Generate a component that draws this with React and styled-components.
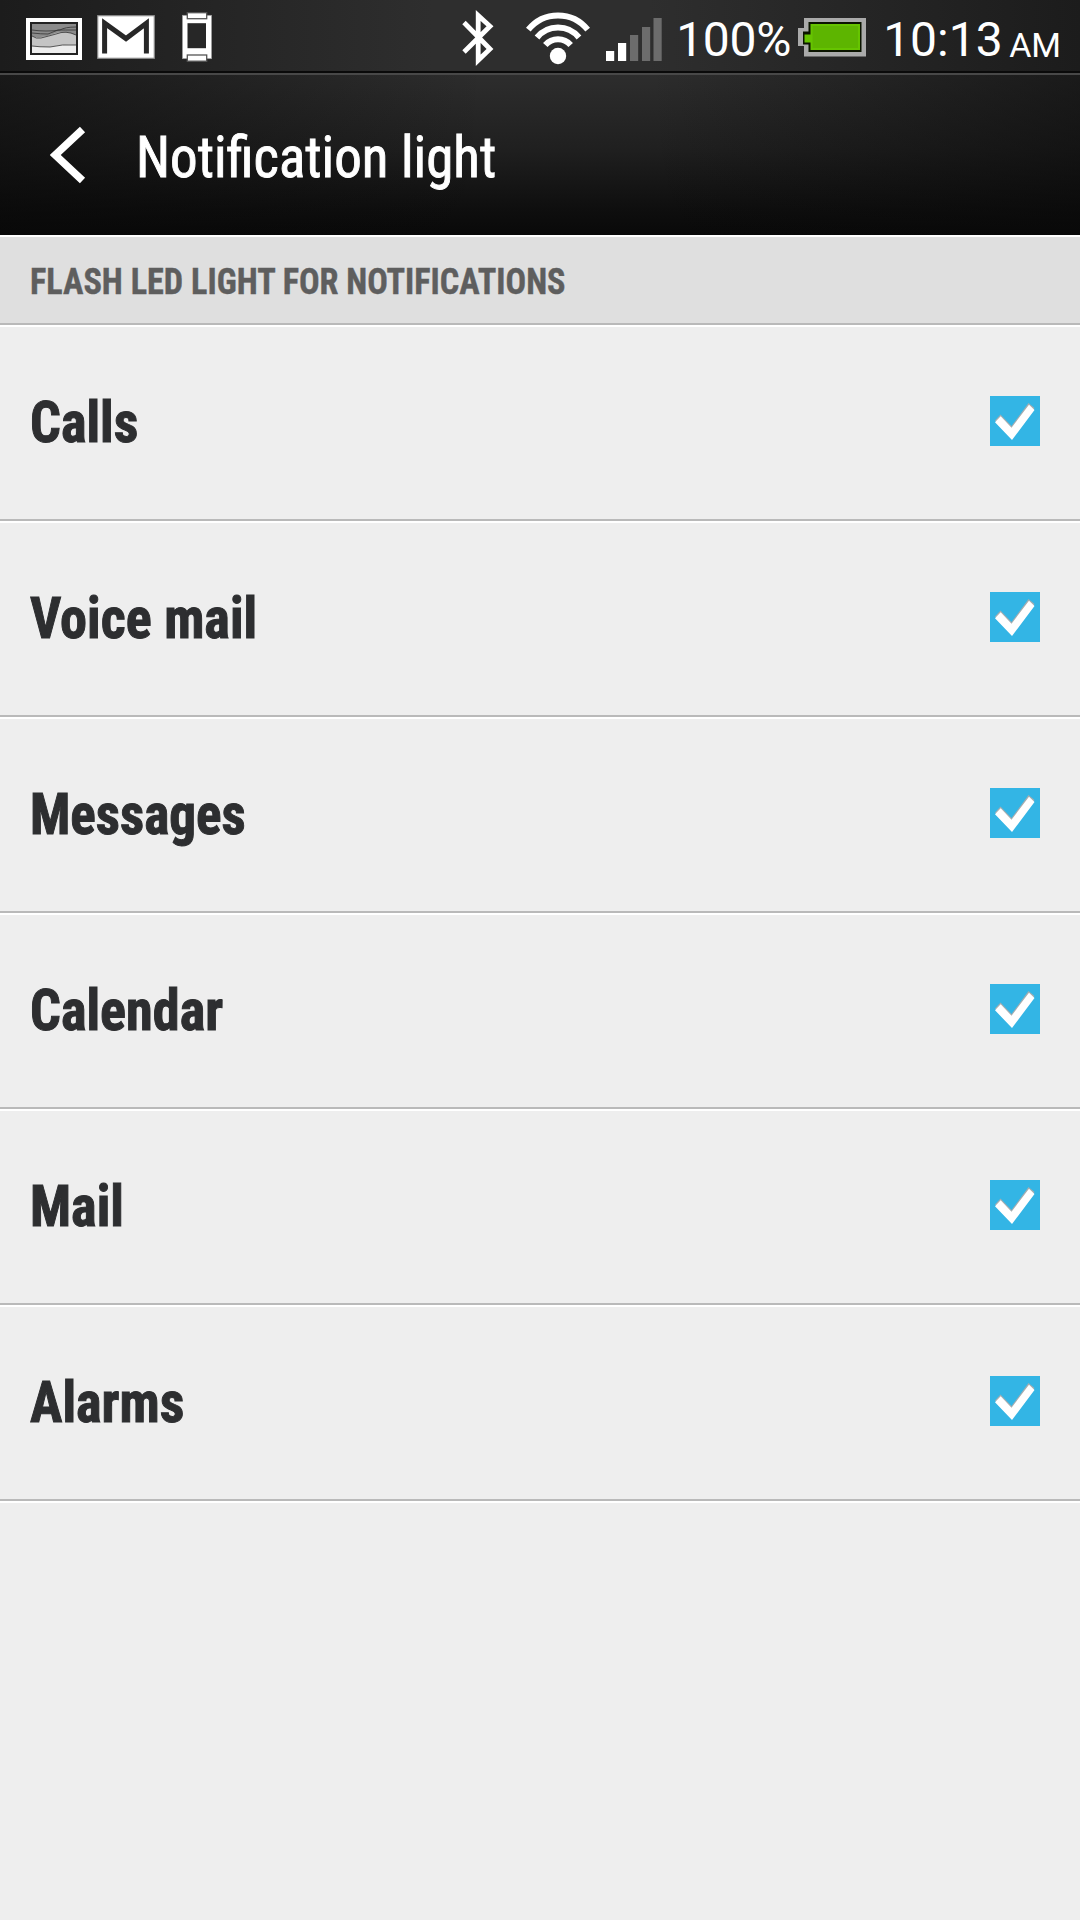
import React, { useState } from "react";
import styled, { createGlobalStyle } from "styled-components";

const ITEMS = [
  { name: "Calls" },
  { name: "Voice mail" },
  { name: "Messages", stretch: 0.918 },
  { name: "Calendar" },
  { name: "Mail" },
  { name: "Alarms" },
];

const BARS = [
  { x: 0, h: 10, on: true },
  { x: 12, h: 18, on: true },
  { x: 24, h: 26 },
  { x: 36, h: 34 },
  { x: 47.5, h: 43 },
];

export default function App() {
  const [checked, setChecked] = useState(() => ITEMS.map(() => true));

  const toggle = (index) =>
    setChecked((prev) => prev.map((c, i) => (i === index ? !c : c)));

  return (
    <>
      <GlobalStyle />
      <Screen>
        <StatusBar>
          <LeftIcons>
            <PictureIcon />
            <GmailIcon />
            <WatchIcon />
          </LeftIcons>
          <RightIcons>
            <BluetoothIcon />
            <WifiIcon />
            <SignalIcon />
            <Percent>100%</Percent>
            <BatteryIcon />
            <Clock>10:13</Clock>
            <Meridiem>AM</Meridiem>
          </RightIcons>
        </StatusBar>
        <Header>
          <BackButton aria-label="Back">
            <svg width="36" height="58" viewBox="0 0 36 58">
              <path d="M32.500 3.500 5.200 29 32.500 54.500" fill="none" stroke="#fff" strokeWidth="7.6" />
            </svg>
          </BackButton>
          <Title>Notification light</Title>
        </Header>
        <SectionHeader>
          <SectionTitle>FLASH LED LIGHT FOR NOTIFICATIONS</SectionTitle>
        </SectionHeader>
        {ITEMS.map((item, index) => (
          <Row key={item.name} onClick={() => toggle(index)}>
            <Label $stretch={item.stretch}>{item.name}</Label>
            <Checkbox role="checkbox" aria-checked={checked[index]} $checked={checked[index]}>
              {checked[index] && <CheckMark />}
            </Checkbox>
          </Row>
        ))}
        <Rest />
      </Screen>
    </>
  );
}

function PictureIcon() {
  return (
    <svg width="56" height="42" viewBox="0 0 56 42">
      <rect width="56" height="42" fill="#fff" />
      <rect x="4" y="4" width="48" height="33" fill="#222" />
      <rect x="6" y="6" width="44" height="29" fill="#8b8b8b" />
      <path d="M6 18q4 2 9 1 8-1 15-4 10-3 20 2v18H6z" fill="#c4c4c4" />
      <path d="M6 28q7 1 18 1 12-3 26-2v8H6z" fill="#ededed" />
      <path
        d="M6 12q7 1 14 1 9 0 14-1 5-3 16-3M6 15q9 1 16 1l10-4q6 0 18 0M6 18q4 3 9 2 8-2 15-4 10-4 20 1M6 28q7 1 18 1 12-3 26-2"
        fill="none"
        stroke="#333"
        strokeWidth="0.8"
      />
    </svg>
  );
}

function GmailIcon() {
  return (
    <svg width="58" height="44" viewBox="0 0 58 44">
      <rect x="0.7" y="0.7" width="56.6" height="42.6" fill="#fff" stroke="#8a8a8a" strokeWidth="1.2" />
      <path d="M7.6 38.5V8.2L29 23.6 49.4 8.2v30.3" fill="none" stroke="#272727" strokeWidth="5" strokeLinejoin="miter" />
    </svg>
  );
}

function WatchIcon() {
  return (
    <svg width="30" height="50" viewBox="0 0 30 50">
      <rect x="0.4" y="3.3" width="29.2" height="43.4" fill="#fff" stroke="#999" strokeWidth="0.7" />
      <rect x="5.5" y="11.2" width="18.5" height="25" fill="#272727" />
      <rect x="5.3" y="0.7" width="19.4" height="6" fill="#fff" stroke="#555" strokeWidth="1.3" />
      <rect x="5.3" y="43" width="19.4" height="6.2" fill="#fff" stroke="#555" strokeWidth="1.3" />
    </svg>
  );
}

function BluetoothIcon() {
  return (
    <svg width="32" height="58" viewBox="0 0 32 58">
      <path d="M2 13.5 28 40 16.2 51.3V6.5L28 17.3 2 43" fill="none" stroke="#fff" strokeWidth="4.8" />
    </svg>
  );
}

function WifiIcon() {
  return (
    <svg width="64" height="54" viewBox="0 0 64 54">
      <circle cx="32" cy="45" r="8.2" fill="#fff" />
      <g fill="none" stroke="#fff" strokeWidth="6">
        <path d="M2.3 18.7A38 38 0 0 1 61.7 18.7" />
        <path d="M11 26.5A27 27 0 0 1 53 26.5" />
        <path d="M19.3 34A17 17 0 0 1 44.7 34" />
      </g>
    </svg>
  );
}

function SignalIcon() {
  return (
    <svg width="56" height="43" viewBox="0 0 56 43">
      {BARS.map((b) => (
        <rect key={b.x} x={b.x} y={43 - b.h} width="8.2" height={b.h} fill={b.on ? "#fff" : "#6c6c6c"} />
      ))}
    </svg>
  );
}

function BatteryIcon() {
  return (
    <svg width="68" height="39" viewBox="0 0 68 39">
      <path d="M6 0h62v38.5H6V28H0V10h6z" fill="#aaa" />
      <path d="M10.5 4h53v30h-53v-7.500H5V13.500h5.500z" fill="#0b1400" />
      <path d="M12.500 6h49.500v26h-49.500v-7.500H6.500v-8h6z" fill="#66c400" />
      <path d="M14.500 8h45.500v22h-45.500z" fill="#5db500" />
    </svg>
  );
}

function CheckMark() {
  return (
    <svg width="50" height="50" viewBox="0 0 50 50">
      <path d="M5 24.500 10.500 18.500 21.500 30 38.500 7 44.500 12 22 42.500z" fill="#a5adb0" />
      <path d="M5 26.300 10.700 20.300 21.500 31.800 39 8.700 44.500 14 22 44z" fill="#fff" />
    </svg>
  );
}

const GlobalStyle = createGlobalStyle`
  * {
    box-sizing: border-box;
  }
  body {
    margin: 0;
    background: #eee;
    font-family: Roboto, sans-serif;
  }
  svg {
    display: block;
    flex-shrink: 0;
  }
`;

const Screen = styled.div`
  display: flex;
  flex-direction: column;
  width: 1080px;
  height: 1920px;
  background: #eee;
  overflow: hidden;
`;

const StatusBar = styled.div`
  display: flex;
  justify-content: space-between;
  height: 73px;
  flex-shrink: 0;
  padding: 0 19px 0 26px;
  border-bottom: 2px solid #0a0a0a;
  background: linear-gradient(90deg, #1c1c1c, #2e2e2e 40%, #2e2e2e 60%, #1c1c1c);
  color: #fff;
`;

const LeftIcons = styled.div`
  display: flex;
  align-items: center;

  svg:nth-child(1) {
    margin: 7px 15px 0 0;
  }
  svg:nth-child(2) {
    margin: 3px 27px 0 0;
  }
  svg:nth-child(3) {
    margin-top: 3px;
  }
`;

const RightIcons = styled.div`
  display: flex;
  align-items: center;

  svg:nth-child(1) {
    margin: 5px 32px 0 0;
  }
  svg:nth-child(2) {
    margin: 4px 16px 0 0;
  }
  svg:nth-child(3) {
    margin: 8px 14px 0 0;
  }
`;

const Percent = styled.span`
  width: 122px;
  margin-top: 8px;
  font-size: 48px;
  line-height: 56px;
  letter-spacing: -0.3px;

  & + svg {
    margin: 4px 17px 0 0;
  }
`;

const Clock = styled.span`
  width: 126px;
  margin-top: 8px;
  font-size: 48px;
  line-height: 56px;
`;

const Meridiem = styled.span`
  margin-top: 18px;
  font-size: 34px;
  line-height: 40px;
`;

const Header = styled.header`
  display: flex;
  align-items: center;
  height: 162px;
  flex-shrink: 0;
  padding-left: 50px;
  border-top: 2px solid #484848;
  background: linear-gradient(90deg, rgba(8, 8, 8, 0.55), transparent 45%, transparent 60%, rgba(8, 8, 8, 0.5)),
    linear-gradient(#2d2d2d, #202020 45%, #0e0e0e 85%, #090909);
`;

const BackButton = styled.button`
  width: 36px;
  margin: 0 50px 0 0;
  padding: 0;
  border: 0;
  background: none;
`;

// Condensed face, drawn slightly narrower than the font's own width
const CondensedText = styled.span`
  font-family: "Roboto Condensed", Roboto, sans-serif;
  font-stretch: 75%;
  transform-origin: 0 50%;
`;

const Title = styled(CondensedText).attrs({ as: "h1" })`
  margin: 0;
  padding-top: 4px;
  font-size: 58px;
  font-weight: 400;
  line-height: 68px;
  color: #fff;
  -webkit-text-stroke: 0.9px #fff;
  transform: scaleX(0.948);
`;

const SectionHeader = styled.div`
  display: flex;
  align-items: center;
  height: 90px;
  flex-shrink: 0;
  padding: 3px 0 0 30px;
  border-top: 2px solid #fff;
  border-bottom: 2px solid #b9b9b9;
  background: #dfdfdf;
`;

const SectionTitle = styled(CondensedText).attrs({ as: "h2" })`
  margin: 0;
  font-size: 36px;
  font-weight: 700;
  color: #5e5e5e;
  -webkit-text-stroke: 0.4px #5e5e5e;
  transform: scaleX(0.95);
`;

const Row = styled.div`
  display: flex;
  align-items: center;
  justify-content: space-between;
  height: 196px;
  flex-shrink: 0;
  padding: 0 40px 0 30px;
  border-top: 2px solid #fff;
  border-bottom: 2px solid #b9b9b9;
`;

const Label = styled(CondensedText)`
  margin-bottom: 2px;
  font-size: 58px;
  font-weight: 700;
  line-height: 68px;
  color: #2d2e30;
  -webkit-text-stroke: 1px #2d2e30;
  transform: scaleX(${(props) => props.$stretch || 0.935});
`;

const Checkbox = styled.div`
  width: 50px;
  height: 50px;
  margin-bottom: 4px;
  background: ${(props) => (props.$checked ? "#33b5e5" : "#fff")};
`;

const Rest = styled.div`
  flex: 1;
  border-top: 2px solid #fff;
`;
